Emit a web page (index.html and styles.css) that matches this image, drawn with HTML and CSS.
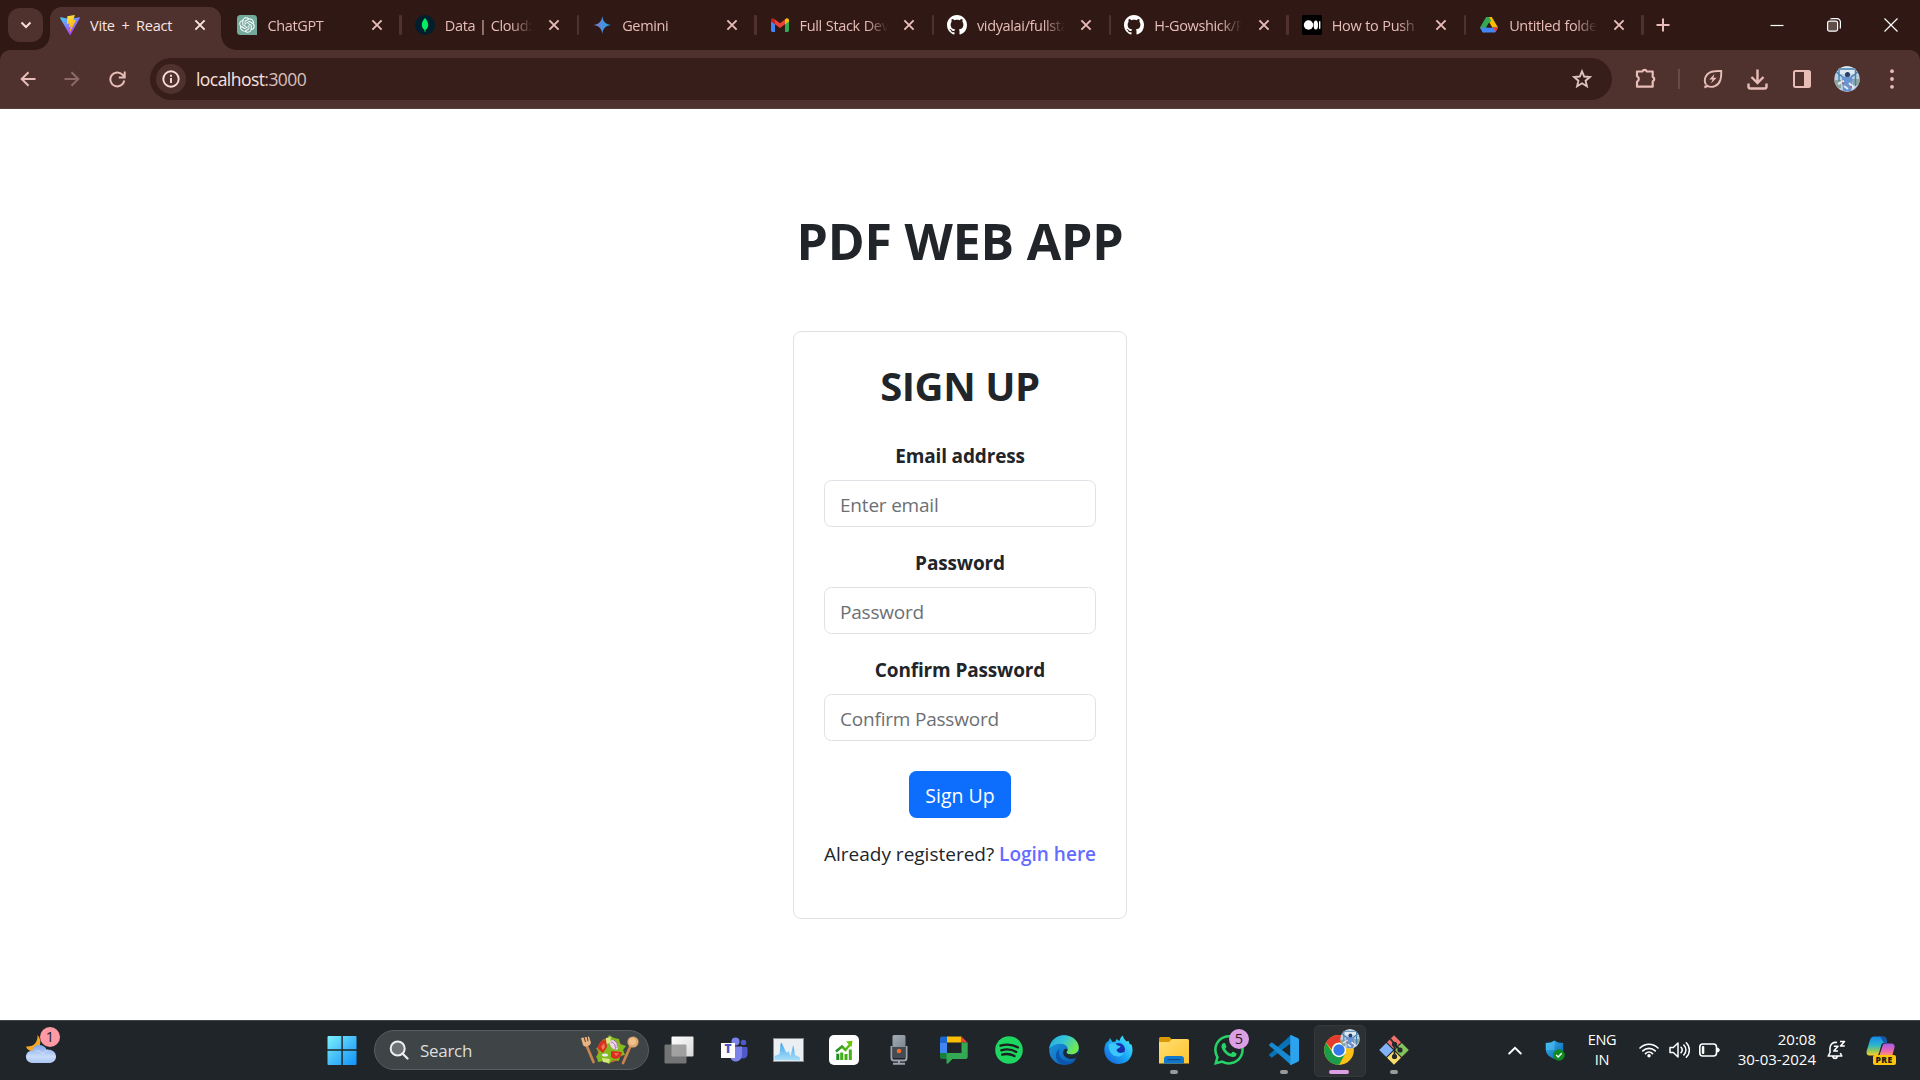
FILE: index.html
```html
<!DOCTYPE html>
<html lang="en">
<head>
<meta charset="utf-8">
<title>Vite + React</title>
<link rel="stylesheet" href="styles.css">
</head>
<body>
<svg class="defs" width="0" height="0" aria-hidden="true">
  <defs>
    <linearGradient id="vite-a" x1="0" y1="0" x2=".6" y2="1"><stop offset="0" stop-color="#41d1ff"/><stop offset="1" stop-color="#bd34fe"/></linearGradient>
    <linearGradient id="vite-b" x1=".4" y1="0" x2=".6" y2="1"><stop offset="0" stop-color="#ffea83"/><stop offset=".1" stop-color="#ffdd35"/><stop offset="1" stop-color="#ffa800"/></linearGradient>
    <linearGradient id="gem" x1="0" y1="0" x2="1" y2="0"><stop offset="0" stop-color="#8b74c4"/><stop offset=".5" stop-color="#4c8fe0"/><stop offset="1" stop-color="#19a0d8"/></linearGradient>
    <linearGradient id="win" x1="0" y1="0" x2="1" y2="1"><stop offset="0" stop-color="#7df3ff"/><stop offset=".5" stop-color="#45bdf8"/><stop offset="1" stop-color="#0f93fb"/></linearGradient>
    <linearGradient id="cloud" x1="0" y1="0" x2="0" y2="1"><stop offset="0" stop-color="#7ea6ea"/><stop offset=".65" stop-color="#c9dcfa"/><stop offset="1" stop-color="#a9c5f3"/></linearGradient>
    <linearGradient id="folder" x1="0" y1="0" x2="1" y2="1"><stop offset="0" stop-color="#ffdf72"/><stop offset="1" stop-color="#ffc32d"/></linearGradient>
    <linearGradient id="edge-a" x1="0" y1="0" x2="1" y2=".5"><stop offset="0" stop-color="#1fa8df"/><stop offset=".5" stop-color="#36c6d6"/><stop offset="1" stop-color="#72e94f"/></linearGradient>
    <linearGradient id="edge-b" x1="0" y1="0" x2="1" y2="1"><stop offset="0" stop-color="#1b9de2"/><stop offset="1" stop-color="#0b56b0"/></linearGradient>
    <linearGradient id="fox" x1="1" y1="0" x2="0" y2="1"><stop offset="0" stop-color="#52f2ff"/><stop offset=".5" stop-color="#19a9f5"/><stop offset="1" stop-color="#1559d8"/></linearGradient>
    <linearGradient id="perf" x1="0" y1="0" x2="0" y2="1"><stop offset="0" stop-color="#3fa7ec"/><stop offset="1" stop-color="#a9def9"/></linearGradient>
    <linearGradient id="chart" x1="0" y1="0" x2="1" y2="0"><stop offset="0" stop-color="#1f8a2a"/><stop offset="1" stop-color="#66c80a"/></linearGradient>
    <linearGradient id="mic" x1="0" y1="0" x2="1" y2="1"><stop offset="0" stop-color="#a4adb6"/><stop offset="1" stop-color="#7d8790"/></linearGradient>
    <linearGradient id="shield" x1="0" y1="0" x2="1" y2="1"><stop offset="0" stop-color="#38b6f0"/><stop offset="1" stop-color="#0762ad"/></linearGradient>
    <linearGradient id="cop-a" x1="0" y1="0" x2="0" y2="1"><stop offset="0" stop-color="#1788e8"/><stop offset=".45" stop-color="#28b5d0"/><stop offset=".75" stop-color="#91c759"/><stop offset="1" stop-color="#ffd02c"/></linearGradient>
    <linearGradient id="cop-b" x1="0" y1="0" x2="0" y2="1"><stop offset="0" stop-color="#a45be8"/><stop offset=".6" stop-color="#e766b6"/><stop offset="1" stop-color="#ff8f70"/></linearGradient>
    <linearGradient id="view" x1="0" y1="0" x2="1" y2="1"><stop offset="0" stop-color="#fff"/><stop offset="1" stop-color="#d8d8d8"/></linearGradient>
    <symbol id="i-close" viewBox="0 0 12 12"><path d="M1.400 1.400l9.200 9.200M10.600 1.400l-9.200 9.200" stroke="currentColor" stroke-width="1.900" fill="none"/></symbol>
    <symbol id="i-github" viewBox="0 0 16 16"><path fill="#fff" d="M8 0C3.58 0 0 3.58 0 8c0 3.54 2.29 6.53 5.47 7.59.4.07.55-.17.55-.38 0-.19-.01-.82-.01-1.49-2.01.37-2.53-.49-2.69-.94-.09-.23-.48-.94-.82-1.13-.28-.15-.68-.52-.01-.53.63-.01 1.08.58 1.23.82.72 1.21 1.87.87 2.33.66.07-.52.28-.87.51-1.07-1.78-.2-3.64-.89-3.64-3.95 0-.87.31-1.59.82-2.15-.08-.2-.36-1.02.08-2.12 0 0 .67-.21 2.2.82.64-.18 1.32-.27 2-.27s1.36.09 2 .27c1.53-1.04 2.2-.82 2.2-.82.44 1.1.16 1.92.08 2.12.51.56.82 1.27.82 2.15 0 3.07-1.87 3.75-3.65 3.95.29.25.54.73.54 1.48 0 1.07-.01 1.93-.01 2.2 0 .21.15.46.55.38A8.01 8.01 0 0 0 16 8c0-4.42-3.58-8-8-8z"/></symbol>
    <symbol id="i-avatar" viewBox="0 0 26 26"><clipPath id="av"><circle cx="13" cy="13" r="12.700"/></clipPath><g clip-path="url(#av)"><path fill="#b9cfe2" d="M0 0h26v26H0z"/><path fill="#dfe9f2" d="M4 0h18v8H4z"/><path fill="#8fa79b" d="M0 14h7v8H0zM19 13h7v6h-7z"/><path d="M5 0v15M21.500 0v20M1 5l9 7M25 5l-9 7M5 3h16" stroke="#4680ae" stroke-width="1.400"/><path fill="#6a94cf" d="M8 12l4-2h3l4 3-2 12H9z"/><circle cx="13.500" cy="8.500" r="2.500" fill="#273d68"/><path d="M4 18l6-3M15 17l5 5M10 20l4 3" stroke="#dfeafa" stroke-width="2"/><path fill="#9b6c8d" d="M8 16h2v2H8zM16 20h2v2h-2z"/></g></symbol>
  </defs>
</svg>

<header class="browser">
  <div class="tabstrip">
    <button class="tab-search" aria-label="Search tabs"><svg width="12" height="8" viewBox="0 0 12 8"><path d="M1.500 1.500L6 6l4.500-4.500" fill="none" stroke="currentColor" stroke-width="2"/></svg></button>
    <div class="tab tab--active">
      <svg class="fav" viewBox="0 0 256 257"><path fill="url(#vite-a)" d="M255.153 37.938 134.897 252.976c-2.483 4.44-8.862 4.466-11.382.048L.875 37.958c-2.746-4.814 1.371-10.646 6.827-9.67l120.385 21.517a6.537 6.537 0 0 0 2.322-.004l117.867-21.483c5.438-.991 9.574 4.796 6.877 9.62Z"/><path fill="url(#vite-b)" d="M185.432.063 96.44 17.501a3.268 3.268 0 0 0-2.634 3.014l-5.474 92.456a3.268 3.268 0 0 0 3.997 3.378l24.777-5.718c2.318-.535 4.413 1.507 3.936 3.838l-7.361 36.047c-.495 2.426 1.782 4.5 4.151 3.78l15.304-4.649c2.372-.72 4.652 1.36 4.15 3.788l-11.698 56.621c-.732 3.542 3.979 5.473 5.943 2.437l1.313-2.028 72.516-144.72c1.215-2.423-.88-5.186-3.54-4.672l-25.505 4.922c-2.396.462-4.435-1.77-3.759-4.114l16.646-57.705c.677-2.35-1.37-4.583-3.769-4.113Z"/></svg>
      <span class="tab-title">Vite + React</span><svg class="close"><use href="#i-close"/></svg>
    </div>
    <div class="tab tab--sep">
      <svg class="fav" viewBox="0 0 20 20"><path fill="#74aa9c" d="M3.500 0h13A3.500 3.500 0 0 1 20 3.500V20H3.500A3.500 3.500 0 0 1 0 16.500v-13A3.500 3.500 0 0 1 3.500 0z"/><g transform="translate(2.200 2.200) scale(.65)"><path fill="#fff" d="M22.2819 9.8211a5.9847 5.9847 0 0 0-.5157-4.9108 6.0462 6.0462 0 0 0-6.5098-2.9A6.0651 6.0651 0 0 0 4.9807 4.1818a5.9847 5.9847 0 0 0-3.9977 2.9 6.0462 6.0462 0 0 0 .7427 7.0966 5.98 5.98 0 0 0 .511 4.9107 6.051 6.051 0 0 0 6.5146 2.9001A5.9847 5.9847 0 0 0 13.2599 24a6.0557 6.0557 0 0 0 5.7718-4.2058 5.9894 5.9894 0 0 0 3.9977-2.9001 6.0557 6.0557 0 0 0-.7475-7.0729zm-9.022 12.6081a4.4755 4.4755 0 0 1-2.8764-1.0408l.1419-.0804 4.7783-2.7582a.7948.7948 0 0 0 .3927-.6813v-6.7369l2.02 1.1686a.071.071 0 0 1 .038.052v5.5826a4.504 4.504 0 0 1-4.4945 4.4944zm-9.6607-4.1254a4.4708 4.4708 0 0 1-.5346-3.0137l.142.0852 4.783 2.7582a.7712.7712 0 0 0 .7806 0l5.8428-3.3685v2.3324a.0804.0804 0 0 1-.0332.0615L9.74 19.9502a4.4992 4.4992 0 0 1-6.1408-1.6464zM2.3408 7.8956a4.485 4.485 0 0 1 2.3655-1.9728V11.6a.7664.7664 0 0 0 .3879.6765l5.8144 3.3543-2.0201 1.1685a.0757.0757 0 0 1-.071 0l-4.8303-2.7865A4.504 4.504 0 0 1 2.3408 7.872zm16.5963 3.8558L13.1038 8.364 15.1192 7.2a.0757.0757 0 0 1 .071 0l4.8303 2.7913a4.4944 4.4944 0 0 1-.6765 8.1042v-5.6772a.79.79 0 0 0-.407-.667zm2.0107-3.0231l-.142-.0852-4.7735-2.7818a.7759.7759 0 0 0-.7854 0L9.409 9.2297V6.8974a.0662.0662 0 0 1 .0284-.0615l4.8303-2.7866a4.4992 4.4992 0 0 1 6.6802 4.66zM8.3065 12.863l-2.02-1.1638a.0804.0804 0 0 1-.038-.0567V6.0742a4.4992 4.4992 0 0 1 7.3757-3.4537l-.142.0805L8.704 5.459a.7948.7948 0 0 0-.3927.6813zm1.0976-2.3654l2.602-1.4998 2.6069 1.4998v2.9994l-2.5974 1.4997-2.6067-1.4997Z"/></g></svg>
      <span class="tab-title">ChatGPT</span><svg class="close"><use href="#i-close"/></svg>
    </div>
    <div class="tab tab--sep">
      <svg class="fav" viewBox="0 0 20 20"><circle cx="10" cy="10" r="10" fill="#001e2b"/><path fill="#00ed64" d="M10 3c2.200 2.500 3.200 4.600 3.200 7 0 2.200-1 3.700-2.700 5.100L10.300 17h-.6l-.2-1.900C7.800 13.700 6.800 12.200 6.800 10c0-2.400 1-4.500 3.200-7z"/></svg>
      <span class="tab-title">Data | Cloud:</span><svg class="close"><use href="#i-close"/></svg>
    </div>
    <div class="tab tab--sep">
      <svg class="fav" viewBox="0 0 20 20"><path fill="url(#gem)" d="M10.300 1.200C11 6.500 13.500 9 18.800 10c-5.300 1-7.800 3.500-8.500 8.800C9.600 13.500 7.100 11 1.800 10c5.300-1 7.800-3.500 8.500-8.800z"/></svg>
      <span class="tab-title">Gemini</span><svg class="close"><use href="#i-close"/></svg>
    </div>
    <div class="tab tab--sep">
      <svg class="fav" viewBox="0 0 20 20"><path fill="#4285f4" d="M1 5.500l4 3V17H2.400A1.400 1.400 0 0 1 1 15.600z"/><path fill="#34a853" d="M15 8.500l4-3v10.100a1.400 1.400 0 0 1-1.400 1.400H15z"/><path fill="#ea4335" d="M5 4.500l5 3.700 5-3.700V9.300l-5 3.700-5-3.700z"/><path fill="#c5221f" d="M1 5.200C1 3.300 3 2.700 4.200 3.700L5 4.500v4.800L1 6.500z"/><path fill="#fbbc04" d="M19 5.200c0-1.900-2-2.500-3.200-1.500L15 4.500v4.800l4-2.800z"/></svg>
      <span class="tab-title">Full Stack Dev</span><svg class="close"><use href="#i-close"/></svg>
    </div>
    <div class="tab tab--sep">
      <svg class="fav"><use href="#i-github"/></svg>
      <span class="tab-title">vidyalai/fullsta</span><svg class="close"><use href="#i-close"/></svg>
    </div>
    <div class="tab tab--sep">
      <svg class="fav"><use href="#i-github"/></svg>
      <span class="tab-title">H-Gowshick/P</span><svg class="close"><use href="#i-close"/></svg>
    </div>
    <div class="tab tab--sep">
      <svg class="fav" viewBox="0 0 20 20"><rect width="20" height="20" rx="1" fill="#000"/><circle cx="6.500" cy="10" r="4.700" fill="#fff"/><ellipse cx="13.800" cy="10" rx="2.200" ry="4.500" fill="#fff"/><rect x="17" y="6" width="1.400" height="8" rx=".7" fill="#fff"/></svg>
      <span class="tab-title">How to Push Y</span><svg class="close"><use href="#i-close"/></svg>
    </div>
    <div class="tab tab--sep">
      <svg class="fav" viewBox="0 0 20 20"><path fill="#fbbc04" d="M12.800 2L19 12.600h-5.800L7.200 2z"/><path fill="#34a853" d="M7.200 2h2.900l2 3.600-6.200 11.500L4 17.500 1 12.600z"/><path fill="#4285f4" d="M1 12.600h18l-2.500 4.300c-.3.500-.7.600-1.200.6H4.700c-.5 0-.9-.1-1.200-.6z"/><path fill="#ea4335" d="M13.500 12.600H19l-2.500 4.300z"/><path fill="#301915" d="M10 7.500l3 5.100H7z"/></svg>
      <span class="tab-title">Untitled folder</span><svg class="close"><use href="#i-close"/></svg>
    </div>
    <svg class="new-tab" width="14" height="14" viewBox="0 0 14 14"><path d="M7 .5v13M.5 7h13" stroke="currentColor" stroke-width="2"/></svg>
    <div class="window-controls">
      <svg width="14" height="14" viewBox="0 0 14 14"><path d="M.5 7.500h13" stroke="#fff" stroke-width="1.200"/></svg>
      <svg width="14" height="14" viewBox="0 0 14 14"><rect x=".6" y="3.100" width="10" height="10" rx="1.800" fill="#5f4f4b" stroke="#fff" stroke-width="1.200"/><path d="M3.300 1C4 .6 4.500.6 5.500.6H10A3.400 3.400 0 0 1 13.400 4v4.500c0 .9 0 1.400-.5 2" fill="none" stroke="#fff" stroke-width="1.200"/></svg>
      <svg width="14" height="14" viewBox="0 0 14 14"><path d="M.5.5l13 13M13.500.5l-13 13" stroke="#fff" stroke-width="1.200"/></svg>
    </div>
  </div>

  <div class="toolbar">
    <div class="nav">
      <svg width="16" height="16" viewBox="0 0 16 16"><path d="M15.500 8H2M8.500 1.200L1.700 8l6.800 6.800" fill="none" stroke="currentColor" stroke-width="2"/></svg>
      <svg class="dim" width="16" height="16" viewBox="0 0 16 16"><path d="M.5 8H14M7.500 1.200L14.300 8l-6.800 6.800" fill="none" stroke="currentColor" stroke-width="2"/></svg>
      <svg width="17" height="17" viewBox="0 0 17 17"><path d="M15.300 9.500A7 7 0 1 1 13.500 3.600L15.500 5.800M15.700.5v6H9.800" fill="none" stroke="currentColor" stroke-width="2"/></svg>
    </div>
    <div class="omnibox">
      <span class="site-info"><svg width="18" height="18" viewBox="0 0 18 18"><circle cx="9" cy="9" r="7.700" fill="none" stroke="currentColor" stroke-width="1.900"/><path d="M9 8v5M9 4.800v1.900" stroke="currentColor" stroke-width="1.900"/></svg></span>
      <span class="url">localhost<span class="port">:3000</span></span>
      <svg class="star" width="20" height="20" viewBox="0 0 20 20"><path d="M10 2.300l2.200 5.200 5.700.5-4.300 3.700 1.300 5.600L10 14.300l-4.900 3 1.300-5.600L2.100 8l5.700-.5z" fill="none" stroke="currentColor" stroke-width="1.900"/></svg>
    </div>
    <div class="actions">
      <svg class="ext" width="22" height="22" viewBox="0 0 22 22"><path d="M2 4.500h5.500a2.200 2.200 0 0 1 4.200 0h6V10a2.200 2.200 0 0 1 0 4.200v5.500H2v-5a3 3 0 0 0 0-5.500z" fill="none" stroke="currentColor" stroke-width="2.200" stroke-linejoin="round"/><path d="M7.500 4a2.200 2.200 0 0 1 4.200 0zM18 9.800a2.200 2.200 0 0 1 0 4.400z" fill="currentColor"/></svg>
      <span class="divider"></span>
      <svg class="leaf" width="20" height="20" viewBox="0 0 20 20"><path d="M3 15.500C0 10.500 3 3 11.500 2.300c2.300-.3 4.500-.4 6.700-.4.200 3.500-.1 6.500-.9 9.200-1.800 5.600-8.300 8.600-13.300 5.400L1.600 18.800M1.500 17.500h3" fill="none" stroke="currentColor" stroke-width="1.900"/><path d="M11.500 5L6.300 10.500h3.200L8 14.500l5.700-5.700h-3.300z" fill="currentColor"/></svg>
      <svg class="dl" width="21" height="21" viewBox="0 0 21 21"><path d="M10.500.5v13M4.500 8l6 6 6-6M1.500 14.500v3a2 2 0 0 0 2 2h14a2 2 0 0 0 2-2v-3" fill="none" stroke="currentColor" stroke-width="2.400"/></svg>
      <svg class="panel" width="18" height="18" viewBox="0 0 18 18"><rect x="1" y="1" width="16" height="16" rx="1.500" fill="none" stroke="currentColor" stroke-width="2"/><path d="M11 1h6v16h-6z" fill="currentColor"/></svg>
      <svg class="me" width="26" height="26"><use href="#i-avatar"/></svg>
      <svg class="kebab" width="4" height="20" viewBox="0 0 4 20"><circle cx="2" cy="2.200" r="1.900" fill="currentColor"/><circle cx="2" cy="10" r="1.900" fill="currentColor"/><circle cx="2" cy="17.800" r="1.900" fill="currentColor"/></svg>
    </div>
  </div>
</header>

<main class="page">
  <h1 class="brand">PDF WEB APP</h1>
  <form class="card">
    <h2 class="card-title">SIGN UP</h2>
    <div class="field"><label class="label" for="email">Email address</label><input class="input" id="email" type="email" placeholder="Enter email"></div>
    <div class="field"><label class="label" for="pw">Password</label><input class="input" id="pw" type="password" placeholder="Password"></div>
    <div class="field"><label class="label" for="pw2">Confirm Password</label><input class="input" id="pw2" type="password" placeholder="Confirm Password"></div>
    <button class="submit" type="button">Sign Up</button>
    <p class="login">Already registered? <a class="link" href="#">Login here</a></p>
  </form>
</main>

<footer class="taskbar">
  <div class="weather">
    <svg width="32" height="30" viewBox="0 0 32 30"><path fill="#f5a623" d="M12.500 1C18 7 15 16 8 17 4.500 17.300 2 15.500 1 12.500 9 13 13 8 12.500 1z"/><path fill="url(#cloud)" d="M7.500 16.500C8.500 9.500 19 9 21.500 15.500 27 15 31 18 31 22.500c0 4-3 6.500-7 6.500H8c-4 0-7-2.500-7-6.300 0-3.700 3-6.200 6.500-6.200z"/><path d="M11 17c3.500-.5 5.500 1 6.500 3 1-2.500 3-3.500 5.500-3.500" fill="none" stroke="#edf4ff" stroke-opacity=".5"/></svg>
    <span class="badge badge--pink">1</span>
  </div>
  <div class="dock">
    <span class="slot"><svg width="30" height="30" viewBox="0 0 30 30"><path fill="url(#win)" d="M1.500 1H15v13.500H.5V2A1 1 0 0 1 1.500 1zM15.500 1h13a1 1 0 0 1 1 1v12.500h-14zM.5 15.500H15V30H1.500a1 1 0 0 1-1-1zM15.500 15.500h14V29a1 1 0 0 1-1 1h-13z"/><path d="M15 0v30M0 15h30" stroke="#1d2529" stroke-width="1.200"/></svg></span>
    <div class="search">
      <svg class="lens" width="20" height="20" viewBox="0 0 20 20"><circle cx="8.700" cy="8.500" r="7" fill="#6c7173" stroke="#eee" stroke-width="2"/><path d="M13.500 13.500l5 5" stroke="#eee" stroke-width="2.300" stroke-linecap="round"/></svg>
      <span class="search-text">Search</span>
      <svg class="salad" width="60" height="31" viewBox="0 0 60 31"><path d="M5.500 8l8 19" stroke="#c98450" stroke-width="2.700" stroke-linecap="round"/><path d="M1 3l2 7c2 3 7 1 8-2L9 1.500" fill="#e7b583"/><path d="M4 2l1.500 5M7 1.200l1 5" stroke="#563c2b" stroke-width="1"/><circle cx="30" cy="15" r="12.500" fill="#c65c2c"/><path fill="#84ba20" d="M16 22l3-5-3-4 5-1 1-6 5-1 2-5 5 3 5 1 1 5 6 2-3 4 2 5-5 1-1 5-6-1-4 4-5-3-6 1-1-4z"/><path fill="#d6e981" d="M26 3l5-1-1 6-4 1zM22 23l8 1-1 4-6-1z"/><path fill="#d8301e" d="M18 14c0-6 4-9 8-9l1 7-4 6zM31 16l11 1c-1 6-6 9-11 5z"/><path fill="#f3765c" d="M21 12l3-4 1 4-2 3zM34 18l5 .5-3 2.500z"/><ellipse cx="34" cy="10" rx="3.500" ry="5.500" fill="#e9d6e5" transform="rotate(-35 34 10)"/><path d="M31 7c4 1 5 4 4 8M34 5c3 2 4 5 3 8" fill="none" stroke="#a15c9f" stroke-width=".8"/><ellipse cx="25" cy="20" rx="3" ry="1.500" fill="#e5eff5"/><path d="M51 10l-8 18" stroke="#c98450" stroke-width="2.700" stroke-linecap="round"/><circle cx="53" cy="7" r="5.600" fill="#dfa66f"/><circle cx="52.500" cy="6.500" r="3.500" fill="#efc18d"/></svg>
    </div>
    <span class="slot"><svg width="30" height="28" viewBox="0 0 30 28"><path fill="url(#view)" d="M8.500.5h20a1 1 0 0 1 1 1v18a1 1 0 0 1-1 1H8.500a1 1 0 0 1-1-1v-18a1 1 0 0 1 1-1z"/><path fill="#8c8c8c" fill-opacity=".78" d="M1.500 8.500h20a1 1 0 0 1 1 1v17a1 1 0 0 1-1 1h-20a1 1 0 0 1-1-1v-17a1 1 0 0 1 1-1z"/></svg></span>
    <span class="slot"><svg width="28" height="26" viewBox="0 0 28 26"><circle cx="15.500" cy="4.500" r="4" fill="#7b83eb"/><circle cx="23.500" cy="5.500" r="2.800" fill="#5059c9"/><path fill="#5059c9" d="M17 10h9.500a1 1 0 0 1 1 1v6c0 6-9 6-9.500 0z"/><path fill="#7b83eb" d="M10 9.500h12v8.500c0 8-11 9-12 1z"/><path fill="#fff" d="M1 6h14v15H1z"/></svg><span class="teams-t">T</span></span>
    <span class="slot"><svg width="31" height="24" viewBox="0 0 31 24"><rect x=".5" y=".5" width="30" height="23" fill="#eceff2" stroke="#878b8e"/><path fill="url(#perf)" d="M1.500 22v-4l5-2 1-10 1-1.500 4 8.500 1.500 2 1.500-2 2 5 2-8 .5-3 1 3 1 7 2 1 3 1.500v3z"/></svg></span>
    <span class="slot"><svg width="30" height="30" viewBox="0 0 30 30"><rect width="30" height="30" rx="5" fill="#fff"/><path d="M12.700 17.500V25M17 19v6M21.300 14.500V25" stroke="#45ad17" stroke-width="3"/><path fill="#1f8a2a" d="M7.300 18.700h3V25h-3z"/><path d="M7 16.500l6-5 3.500 3.500 5-6" fill="none" stroke="url(#chart)" stroke-width="2.500"/><path fill="#66c80a" d="M17 6.500l6.500-.8-1 6.500z"/></svg></span>
    <span class="slot"><svg width="18" height="30" viewBox="0 0 18 30"><path d="M1.500 11v12q0 2.500 2.500 2.500h10q2.500 0 2.500-2.500V11M9 25v4M3 28.800h12" fill="none" stroke="#9ba4ac" stroke-width="2"/><path fill="url(#mic)" d="M4 0h10a1.500 1.500 0 0 1 1.500 1.500V12h-13V1.500A1.500 1.500 0 0 1 4 0z"/><path fill="#444b52" d="M2.500 12h13v9.500a1.500 1.500 0 0 1-1.500 1.500H4a1.500 1.500 0 0 1-1.500-1.500z"/><circle cx="9" cy="16" r="2.300" fill="#f36d2c"/></svg></span>
    <span class="slot"><svg width="28" height="28" viewBox="0 0 28 28"><path fill="#1967d2" d="M2 .5h5v6H0v-4a2 2 0 0 1 2-2z"/><path fill="#fbbc04" d="M7 .5h14.500v6H7z"/><path fill="#ea4335" d="M21.500.5l6 6h-6z"/><path fill="#4285f4" d="M0 6.500h7V17H0z"/><path fill="#188038" d="M0 17h7v6H2a2 2 0 0 1-2-2z"/><path fill="#34a853" d="M21.500 6.500h6.200V21a2 2 0 0 1-2 2H12.500L8 27.500c-.6.600-1.500.3-1.500-.5V17h15z"/></svg></span>
    <span class="slot"><svg width="28" height="28" viewBox="0 0 28 28"><circle cx="14" cy="14" r="13.800" fill="#1ed760"/><path d="M5.500 9.700c6-1.700 12.500-1.100 17.500 1.700M6.300 14.300c5-1.400 10.700-.9 15 1.600M7.200 18.600c4.300-1.100 8.400-.7 12.300 1.500" fill="none" stroke="#1c1f21" stroke-width="2.300" stroke-linecap="round"/></svg></span>
    <span class="slot"><svg width="30" height="30" viewBox="0 0 30 30"><circle cx="15" cy="15" r="14.800" fill="url(#edge-b)"/><path fill="url(#edge-a)" d="M.2 13.500C1.500 5 8 .2 15 .2c8 0 14.800 5.500 14.800 12.300 0 4.500-3.500 7-7.300 7-3.200 0-5.200-1-5-2.400.2-.7 1.200-1.100 1.200-3 0-3-3-5.300-7-5.300-4.500 0-8.500 1.700-11.500 4.700z"/><path fill="#0a55ad" d="M10.500 14c-2 5 1 12.500 10 12.700 2.500 0 5-.8 6.500-2C24 28.500 20 30 15 29.800 6 28 4.500 18 10.500 14z"/><path fill="#1d2a36" d="M18.600 14.500c0 1.900-1.300 2-1.200 3 .2 1.300 2.300 2 5.100 2 3 0 5.300-1.200 6.700-3.500v5.500c-2.500 2.500-6 2.900-9 2.200-4.500-1-7-4.500-5.700-8 .7-1.800 2.200-2.700 4.100-1.200z"/></svg></span>
    <span class="slot"><svg width="30" height="30" viewBox="0 0 30 30"><path fill="url(#fox)" d="M4.500 6l1.500-3 2.500 4 3-.5 1-2.500 3 2C16 3.500 17 1.500 19 .5c.2 3 2 4.500 3.500 6l2-.8c.5 1.300 1 2.300 1 3.300l2 .5c3.500 9-2 19.500-12.500 19.500C3.500 29-3 18 2 8z"/><circle cx="14.500" cy="14.500" r="6.500" fill="#152fae"/><path fill="#3bc6fb" d="M4.500 10c3-3 7-2.500 9 .5l3 .5c0 2-3.500 2.500-4 4 1 3 5 4 8.500 1.500-1.500 4-6 6-10 4.500C7.500 20 4.500 15 4.500 10z"/></svg></span>
    <span class="slot slot--run"><svg width="30" height="28" viewBox="0 0 30 28"><path fill="#d99a06" d="M1.500 1h9l3 3v6H0V2.500A1.500 1.500 0 0 1 1.500 1z"/><path fill="url(#folder)" d="M0 6h10l3-3h15.500A1.500 1.500 0 0 1 30 4.500v23H0z"/><path fill="#1078cc" d="M5 27.500V23a3 3 0 0 1 3-3h14a3 3 0 0 1 3 3v4.500z"/><path d="M9 23.700h12" stroke="#0c4f91" stroke-width="1.300" stroke-linecap="round"/></svg></span>
    <span class="slot"><svg width="30" height="30" viewBox="0 0 16 16"><path fill="#25d366" d="M13.601 2.326A7.85 7.85 0 0 0 7.994 0C3.627 0 .068 3.558.064 7.926c0 1.399.366 2.76 1.057 3.965L0 16l4.204-1.102a7.9 7.9 0 0 0 3.79.965h.004c4.368 0 7.926-3.558 7.93-7.93A7.9 7.9 0 0 0 13.6 2.326zM7.994 14.521a6.6 6.6 0 0 1-3.356-.92l-.24-.144-2.494.654.666-2.433-.156-.251a6.56 6.56 0 0 1-1.007-3.505c0-3.626 2.957-6.584 6.591-6.584a6.56 6.56 0 0 1 4.66 1.931 6.56 6.56 0 0 1 1.928 4.66c-.004 3.639-2.961 6.592-6.592 6.592m3.615-4.934c-.197-.099-1.17-.578-1.353-.646-.182-.065-.315-.099-.445.099-.133.197-.513.646-.627.775-.114.133-.232.148-.43.05-.197-.1-.836-.308-1.592-.985-.59-.525-.985-1.175-1.103-1.372-.114-.198-.011-.304.088-.403.087-.088.197-.232.296-.346.1-.114.133-.198.198-.33.065-.134.034-.248-.015-.347-.05-.099-.445-1.076-.612-1.47-.16-.389-.323-.335-.445-.34-.114-.007-.247-.007-.38-.007a.73.73 0 0 0-.529.247c-.182.198-.691.677-.691 1.654s.71 1.916.81 2.049c.098.133 1.394 2.132 3.383 2.992.47.205.84.326 1.129.418.475.152.904.129 1.246.08.38-.058 1.171-.48 1.338-.943.164-.464.164-.86.114-.943-.049-.084-.182-.133-.38-.232"/></svg><span class="badge badge--violet">5</span></span>
    <span class="slot slot--run"><svg width="30" height="30" viewBox="0 0 30 30"><path fill="#0673b8" d="M21.500 8.500L3.500 22.300c-.5.400-1 .3-1.400-.1L.5 20.800c-.5-.5-.5-1.200 0-1.700L22 0z"/><path fill="#1689d1" d="M21.500 21.500L3.500 7.700c-.5-.4-1-.3-1.400.1L.5 9.200c-.5.500-.5 1.200 0 1.700L22 30z"/><path fill="#2ba3ef" d="M22 0l7 3.200c.6.300 1 .8 1 1.500v20.600c0 .7-.4 1.200-1 1.500L22 30c-.5.200-1 0-.8-.6V.6C21 0 21.500-.2 22 0z"/></svg></span>
    <span class="slot slot--active"><svg width="30" height="30" viewBox="0 0 30 30"><circle cx="15" cy="15" r="14.900" fill="#fbc116"/><path fill="#1a9c48" d="M2 7.700A14.900 14.900 0 0 0 15 29.900l6.300-11.300L9 18.500z"/><path fill="#e33b2e" d="M2 7.600A14.900 14.900 0 0 1 27.900 7.500H15c-4 0-7 3-7.200 7z"/><circle cx="15" cy="15" r="7.200" fill="#fff"/><circle cx="15" cy="15" r="5.700" fill="#3279ec"/></svg><svg class="mini" width="20" height="20"><use href="#i-avatar"/></svg></span>
    <span class="slot slot--run"><svg width="30" height="30" viewBox="0 0 30 30"><path fill="#f0706a" d="M15 .2l7 7-7 7-7-7z"/><path fill="#82b0fb" d="M7.200 8l7 7-7 7-7-7z"/><path fill="#85c45a" d="M22.800 8l7 7-7 7-7-7z"/><path fill="#f9dc6a" d="M15 15.800l7 7-7 7-7-7z"/><path d="M11.500 4l4 5v12M15.500 9l5.500 6" fill="none" stroke="#25272a" stroke-width="1.800"/><circle cx="15.500" cy="9.300" r="2.600" fill="#25272a"/><circle cx="21" cy="15" r="2.600" fill="#25272a"/><circle cx="15.500" cy="21.500" r="2.600" fill="#25272a"/></svg></span>
  </div>
  <div class="tray">
    <svg class="t-chev" width="14" height="9" viewBox="0 0 14 9"><path d="M1.200 7.500L7 1.800l5.800 5.700" fill="none" stroke="#fff" stroke-width="1.900" stroke-linecap="round"/></svg>
    <svg class="t-shield" width="20" height="21" viewBox="0 0 20 21"><path fill="url(#shield)" d="M9.500.5c2 1.700 5 2.500 8.700 2.500v6c0 5-3.500 8-8.700 10C4.200 17 .8 14 .8 9V3C4.500 3 7.500 2.200 9.500.5z"/><path fill="#55c8f6" d="M9.500.5V10H.8V3C4.500 3 7.500 2.200 9.500.5z" opacity=".5"/><circle cx="14" cy="15" r="5.800" fill="#0f8a20"/><path d="M11.200 15l2 2 3.500-3.700" fill="none" stroke="#fff" stroke-width="1.500"/></svg>
    <span class="lang"><span>ENG</span><span>IN</span></span>
    <svg class="t-wifi" width="20" height="16" viewBox="0 0 20 16"><path d="M1 6a12.700 12.700 0 0 1 18 0M3.800 8.900a8.800 8.800 0 0 1 12.400 0M6.500 11.600a5 5 0 0 1 7 0" fill="none" stroke="#fff" stroke-width="1.600" stroke-linecap="round"/><circle cx="10" cy="13.800" r="1.700" fill="#fff"/></svg>
    <svg class="t-vol" width="21" height="18" viewBox="0 0 21 18"><path d="M1 6.500h3.300L9 2v14l-4.700-4.500H1zM12 6.300a4 4 0 0 1 0 5.400M14.800 4a7 7 0 0 1 0 10M17.300 1.700a10.200 10.200 0 0 1 0 14.600" fill="none" stroke="#fff" stroke-width="1.500" stroke-linecap="round" stroke-linejoin="round"/></svg>
    <svg class="t-bat" width="21" height="14" viewBox="0 0 21 14"><rect x=".8" y="1" width="16.700" height="12" rx="3" fill="none" stroke="#fff" stroke-width="1.600"/><rect x="2.800" y="3" width="2.500" height="8" rx="1" fill="#fff"/><path d="M18.500 5c2.300 0 2.300 4 0 4z" fill="#fff" stroke="#fff"/></svg>
    <span class="clock"><span>20:08</span><span>30-03-2024</span></span>
    <svg class="t-bell" width="19" height="20" viewBox="0 0 19 20"><path d="M10 2.500C6 1.700 3 4.500 3 8v4.500L1.200 16h13.600l-1.500-3M5.800 16.500c.5 2.500 4 2.500 4.500 0M6.800 6.200H11L6.800 11H11M13 1.500h4.500L13.500 6h4.300" fill="none" stroke="#fff" stroke-width="1.600" stroke-linejoin="round"/></svg>
    <span class="copilot"><svg width="30" height="29" viewBox="0 0 30 29"><path fill="url(#cop-a)" d="M8 .5h9c2 0 3 1 3.500 3L21 7h-3c-2 0-2.500 1-3 3l-2 7c-.5 2-2 2.500-3.500 2.500H4c-3 0-4-1.500-3.200-5L4 4C4.700 1.700 6 .5 8 .5z"/><path fill="url(#cop-b)" d="M19 7.500h6c3 0 4.200 1.500 3.400 4.500l-2 7H13.500l3-9c.5-1.700 1.200-2.500 2.500-2.500z"/><path fill="#14479e" d="M14 .5h3c2 0 3 1 3.500 3L21 7h-3z" opacity=".8"/></svg><span class="pre">PRE</span></span>
  </div>
</footer>
</body>
</html>
```
FILE: styles.css
```css
* { box-sizing: border-box; }
body {
  margin: 0;
  width: 1920px;
  height: 1080px;
  overflow: hidden;
  display: flex;
  flex-direction: column;
  background: #fff;
  font-family: "Open Sans", "Noto Sans", sans-serif;
}
svg { display: block; flex: none; }
.defs { position: absolute; }

/* Browser tabs */
.browser { height: 109px; flex: none; background: #301915; color: #e8bdb7; }
.tabstrip { height: 50px; display: flex; align-items: center; padding-left: 8px; }
.tab-search {
  width: 35px; height: 34px; margin-right: 7px; padding: 0; border: 0; border-radius: 12px;
  background: #4f322e; color: #f6ddd9; display: flex; align-items: center; justify-content: center; flex: none;
}
.tab { position: relative; width: 177.400px; height: 50px; flex: none; display: flex; align-items: center; padding-left: 10px; }
.tab > * { position: relative; }
.fav { width: 20px; height: 20px; margin-right: 10px; }
.tab-title {
  width: 89px; margin-right: 14.500px; padding-top: 1px; overflow: hidden; white-space: nowrap; font-size: 14.500px; line-height: 24px;
  letter-spacing: -.35px; word-spacing: .5px;
  -webkit-mask-image: linear-gradient(to right, #000 66px, transparent 88px);
  mask-image: linear-gradient(to right, #000 66px, transparent 88px);
}
.close { width: 12px; height: 12px; }
.tab--sep::after { content: ""; width: 2.500px; height: 20px; margin-left: 16.500px; border-radius: 1px; background: #4f322e; }
.tab--active { color: #fae5e1; }
.tab--active .tab-title { word-spacing: 3px; letter-spacing: -.2px; -webkit-mask-image: none; mask-image: none; }
.tab--active::before {
  content: ""; position: absolute; left: -15px; top: 7px; width: 201px; height: 43px;
  background:
    radial-gradient(circle at 0 0, transparent 14.500px, #4f322e 15px) left bottom / 15px 15px no-repeat,
    radial-gradient(circle at 100% 0, transparent 14.500px, #4f322e 15px) right bottom / 15px 15px no-repeat,
    linear-gradient(#4f322e, #4f322e) 15px 12px / 171px 31px no-repeat,
    linear-gradient(#4f322e, #4f322e) 27px 0 / 147px 12px no-repeat,
    radial-gradient(circle at 12px 12px, #4f322e 11.800px, transparent 12.300px) 15px 0 / 12px 12px no-repeat,
    radial-gradient(circle at 0 12px, #4f322e 11.800px, transparent 12.300px) 174px 0 / 12px 12px no-repeat;
}
.new-tab { margin-left: 9.500px; }
.window-controls { margin-left: auto; padding-right: 22px; display: flex; gap: 43px; }

/* Toolbar */
.toolbar { height: 59px; background: #4f322e; border-bottom: 1px solid #5c423f; border-radius: 10px 10px 0 0; display: flex; align-items: center; }
.nav { width: 150px; padding-left: 19.500px; display: flex; align-items: center; gap: 28.800px; flex: none; }
.dim { color: #8c6965; }
.omnibox { width: 1462px; height: 42px; flex: none; border-radius: 21px; background: #381e1b; display: flex; align-items: center; padding: 0 20px 0 6px; }
.site-info { width: 30px; height: 30px; border-radius: 50%; background: #4f322e; color: #f8ddd9; display: flex; align-items: center; justify-content: center; }
.url { margin-left: 10px; font-size: 17.500px; letter-spacing: -.55px; color: #f5e2df; }
.port { color: #d7c0bc; }
.star { margin-left: auto; color: #dcc5c1; }
.actions { display: flex; align-items: center; }
.ext { margin-left: 23px; margin-top: -3px; }
.divider { width: 2px; height: 20px; margin-left: 21px; background: #6c4a46; }
.leaf { margin-left: 22.500px; }
.dl { margin-left: 24.500px; }
.panel { margin-left: 25px; }
.me { margin-left: 23px; }
.kebab { margin-left: 30px; }

/* Sign-up page */
.page { flex: 1; display: flex; flex-direction: column; align-items: center; color: #212529; font-size: 19px; }
.brand { margin: 102px 0 0; font-size: 50px; line-height: 60px; letter-spacing: -.2px; font-weight: 700; white-space: nowrap; }
.card { width: 334px; height: 588px; margin: 60px 0 0; padding: 30px; border: 1px solid #dee2e6; border-radius: 8px; display: flex; flex-direction: column; align-items: center; }
.card-title { margin: 0 0 30px; font-size: 40px; line-height: 48px; letter-spacing: -.4px; font-weight: 700; }
.field { width: 272px; margin-bottom: 20px; display: flex; flex-direction: column; align-items: center; }
.label { height: 30px; line-height: 32px; margin-bottom: 10px; font-weight: 700; font-size: 19px; letter-spacing: -.15px; white-space: nowrap; }
.input { width: 100%; height: 47px; padding: 2px 15px 0; border: 1px solid #dee2e6; border-radius: 7.500px; background: #fff; font: 400 19px "Open Sans", "Noto Sans", sans-serif; letter-spacing: -.2px; outline: 0; }
.input::placeholder { color: #6c7075; opacity: 1; }
.submit { width: 102px; height: 47px; margin-top: 10px; padding: 2px 0 0; border: 0; border-radius: 7.500px; background: #0d6efd; color: #fff; font: 400 19.500px "Open Sans", "Noto Sans", sans-serif; letter-spacing: 0; white-space: nowrap; flex: none; }
.login { margin: 21px 0 0; line-height: 30px; white-space: nowrap; letter-spacing: 0; }
.link { color: #646cff; font-weight: 600; text-decoration: none; }

/* Taskbar */
.taskbar { height: 60px; flex: none; display: flex; align-items: center; background: #1f2528; box-shadow: inset 0 1px #3f4648; color: #fff; }
.weather { position: relative; width: 314.500px; padding-left: 25px; padding-bottom: 2px; flex: none; }
.badge { position: absolute; width: 20px; height: 20px; border-radius: 50%; color: #1b1b1b; font-size: 14.500px; line-height: 20px; text-align: center; }
.badge--pink { left: 40px; top: -7px; background: #ff99a4; }
.badge--violet { right: 7px; top: 8.500px; background: #dd9fe4; }
.dock { display: flex; align-items: center; height: 60px; }
.slot { position: relative; width: 55px; height: 60px; display: flex; align-items: center; justify-content: center; flex: none; }
.dock > .slot:first-child { margin-right: 4.500px; }
.search { width: 275px; height: 40px; margin-right: 2px; padding-left: 14px; padding-right: 8px; border-radius: 20px; border: 1px solid #585d5f; background: #3f4446; display: flex; align-items: center; flex: none; }
.lens { margin-bottom: 1px; }
.search-text { margin-left: 11px; font-size: 17px; letter-spacing: -.3px; color: #dcdede; }
.salad { margin-left: auto; }
.teams-t { position: absolute; left: 15px; top: 20px; width: 14px; text-align: center; font-size: 12px; line-height: 17px; font-weight: 800; color: #4b53bc; }
.slot--run::after { content: ""; position: absolute; left: 23.500px; bottom: 6px; width: 8px; height: 4px; border-radius: 2px; background: #9a9a9a; }
.slot--active::before { content: ""; position: absolute; left: 2.500px; top: 5px; width: 50px; height: 50px; border-radius: 5px; background: #2c3033; border: 1px solid #35393c; }
.slot--active > svg { position: relative; }
.slot--active > .mini { position: absolute; right: 6px; top: 9px; }
.slot--active::after { content: ""; position: absolute; left: 17.500px; bottom: 6px; width: 20px; height: 4px; border-radius: 2px; background: #dd9fe4; }
.tray { margin-left: auto; display: flex; align-items: center; padding-right: 24.500px; }
.t-shield { margin-left: 23.500px; }
.lang { width: 40px; margin-left: 17px; padding-bottom: 1px; display: flex; flex-direction: column; align-items: center; font-size: 14.500px; line-height: 20px; letter-spacing: -.3px; }
.t-wifi { margin-left: 17px; }
.t-vol { margin-left: 10px; }
.t-bat { margin-left: 9px; }
.clock { width: 80px; margin-left: 16px; padding-bottom: 2px; display: flex; flex-direction: column; align-items: flex-end; font-size: 15px; line-height: 20px; letter-spacing: 0; white-space: nowrap; }
.t-bell { margin-left: 10.500px; }
.copilot { position: relative; margin-left: 20px; }
.pre { position: absolute; left: 7px; top: 19px; width: 23px; height: 10px; border-radius: 2px; background: #ffc40c; color: #1b1b1b; font-size: 8.500px; font-weight: 800; line-height: 10px; text-align: center; letter-spacing: .4px; }
```
